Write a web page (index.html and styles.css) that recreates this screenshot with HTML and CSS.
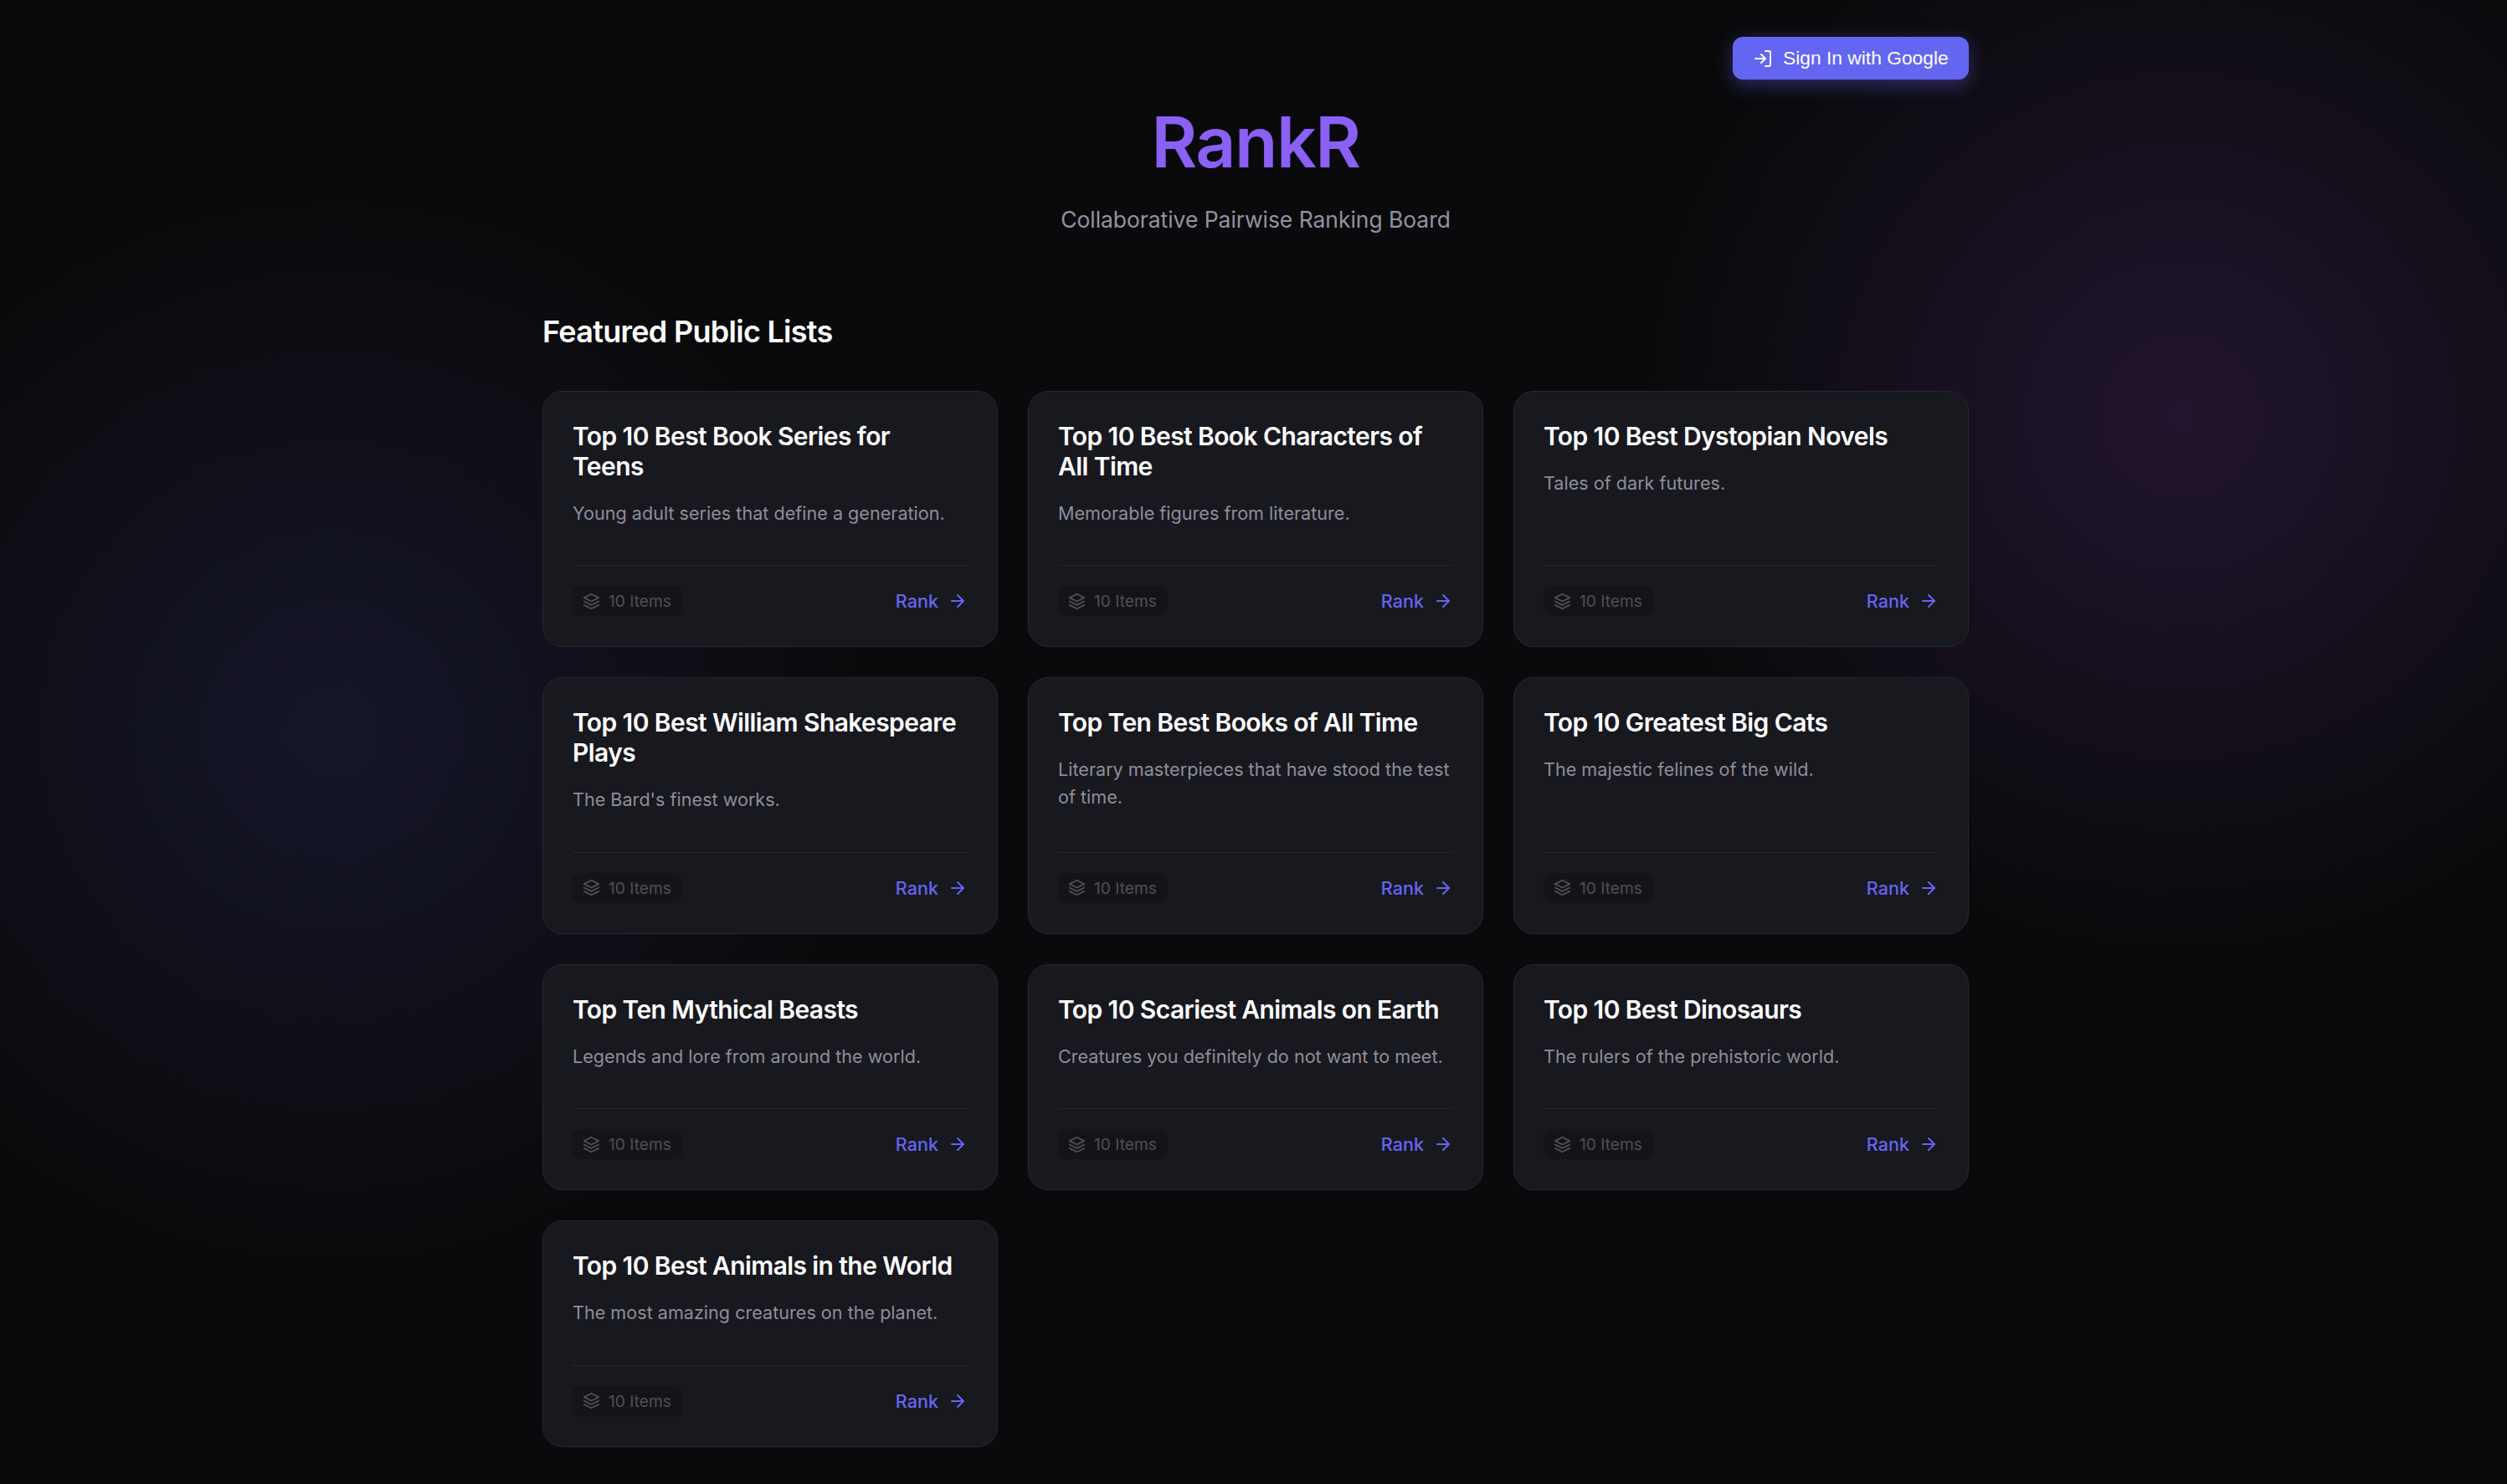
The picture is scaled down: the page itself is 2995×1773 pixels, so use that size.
FILE: index.html
```
<!DOCTYPE html>
<html lang="en">
<head>
<meta charset="utf-8">
<title>RankR</title>
<link rel="stylesheet" href="styles.css">
</head>
<body>
<svg class="sprite" width="0" height="0" aria-hidden="true">
  <symbol id="i-layers" viewBox="0 0 24 24"><path d="M12 2 2 7l10 5 10-5-10-5Z"/><path d="m2 17 10 5 10-5"/><path d="m2 12 10 5 10-5"/></symbol>
  <symbol id="i-arrow" viewBox="0 0 24 24"><path d="M5 12h14"/><path d="m12 5 7 7-7 7"/></symbol>
</svg>
<div class="page">
  <div class="topbar">
    <button class="signin">
      <svg class="ico-login" viewBox="0 0 24 24"><path d="M15 3h4a2 2 0 0 1 2 2v14a2 2 0 0 1-2 2h-4"/><path d="m10 17 5-5-5-5"/><path d="M15 12H3"/></svg>
      <span>Sign In with Google</span>
    </button>
  </div>
  <header class="hero">
    <h1 class="brand">RankR</h1>
    <p class="tagline">Collaborative Pairwise Ranking Board</p>
  </header>
  <h2 class="section-title">Featured Public Lists</h2>
  <main class="grid">
    <article class="card"><h3>Top 10 Best Book Series for Teens</h3><p>Young adult series that define a generation.</p><footer class="foot"><span class="chip"><svg class="ico-layers"><use href="#i-layers"/></svg>10 Items</span><a class="rank">Rank<svg class="ico-arrow"><use href="#i-arrow"/></svg></a></footer></article>
    <article class="card"><h3>Top 10 Best Book Characters of All Time</h3><p>Memorable figures from literature.</p><footer class="foot"><span class="chip"><svg class="ico-layers"><use href="#i-layers"/></svg>10 Items</span><a class="rank">Rank<svg class="ico-arrow"><use href="#i-arrow"/></svg></a></footer></article>
    <article class="card"><h3>Top 10 Best Dystopian Novels</h3><p>Tales of dark futures.</p><footer class="foot"><span class="chip"><svg class="ico-layers"><use href="#i-layers"/></svg>10 Items</span><a class="rank">Rank<svg class="ico-arrow"><use href="#i-arrow"/></svg></a></footer></article>
    <article class="card"><h3>Top 10 Best William Shakespeare Plays</h3><p>The Bard's finest works.</p><footer class="foot"><span class="chip"><svg class="ico-layers"><use href="#i-layers"/></svg>10 Items</span><a class="rank">Rank<svg class="ico-arrow"><use href="#i-arrow"/></svg></a></footer></article>
    <article class="card"><h3>Top Ten Best Books of All Time</h3><p>Literary masterpieces that have stood the test of time.</p><footer class="foot"><span class="chip"><svg class="ico-layers"><use href="#i-layers"/></svg>10 Items</span><a class="rank">Rank<svg class="ico-arrow"><use href="#i-arrow"/></svg></a></footer></article>
    <article class="card"><h3>Top 10 Greatest Big Cats</h3><p>The majestic felines of the wild.</p><footer class="foot"><span class="chip"><svg class="ico-layers"><use href="#i-layers"/></svg>10 Items</span><a class="rank">Rank<svg class="ico-arrow"><use href="#i-arrow"/></svg></a></footer></article>
    <article class="card"><h3>Top Ten Mythical Beasts</h3><p>Legends and lore from around the world.</p><footer class="foot"><span class="chip"><svg class="ico-layers"><use href="#i-layers"/></svg>10 Items</span><a class="rank">Rank<svg class="ico-arrow"><use href="#i-arrow"/></svg></a></footer></article>
    <article class="card"><h3>Top 10 Scariest Animals on Earth</h3><p>Creatures you definitely do not want to meet.</p><footer class="foot"><span class="chip"><svg class="ico-layers"><use href="#i-layers"/></svg>10 Items</span><a class="rank">Rank<svg class="ico-arrow"><use href="#i-arrow"/></svg></a></footer></article>
    <article class="card"><h3>Top 10 Best Dinosaurs</h3><p>The rulers of the prehistoric world.</p><footer class="foot"><span class="chip"><svg class="ico-layers"><use href="#i-layers"/></svg>10 Items</span><a class="rank">Rank<svg class="ico-arrow"><use href="#i-arrow"/></svg></a></footer></article>
    <article class="card"><h3>Top 10 Best Animals in the World</h3><p>The most amazing creatures on the planet.</p><footer class="foot"><span class="chip"><svg class="ico-layers"><use href="#i-layers"/></svg>10 Items</span><a class="rank">Rank<svg class="ico-arrow"><use href="#i-arrow"/></svg></a></footer></article>
  </main>
</div>
</body>
</html>
```
FILE: styles.css
```
* { box-sizing: border-box; }
html, body { margin: 0; height: 100%; }
body {
  min-height: 1773px;
  overflow: hidden;
  font-family: Inter, "Liberation Sans", sans-serif;
  color: #fff;
  background-color: #0a0a0c;
  background-image:
    radial-gradient(circle 640px at 2606px 497px, rgba(168, 85, 247, 0.15), transparent 100%),
    radial-gradient(circle 640px at 397px 873px, rgba(99, 102, 241, 0.13), transparent 100%);
}
.sprite { position: absolute; }
.page { width: 1704px; margin: 0 0 0 648px; padding-top: 44px; }
.topbar { display: flex; justify-content: flex-end; height: 51px; }
.signin {
  display: flex; align-items: center; gap: 12px;
  height: 51px; width: 282px; padding: 0 24px;
  border: 0; border-radius: 12px;
  background: #6366f1; color: #fff;
  font: 22.8px "Liberation Sans", Arial, sans-serif;
  white-space: nowrap;
  box-shadow: 0 6px 21px rgba(99, 102, 241, 0.4);
}
.ico-login { flex: none; width: 24px; height: 24px; fill: none; stroke: currentColor; stroke-width: 2; stroke-linecap: round; stroke-linejoin: round; }
.hero { text-align: center; }
.brand { margin: 21px 0 0; font-size: 84px; font-weight: 600; line-height: 108px; letter-spacing: -1.5px; color: #8a60f5; }
.tagline { margin: 18px 0 0; font-size: 26.4px; line-height: 40px; color: #9393a0; }
.section-title { margin: 90px 0 0; font-size: 36px; font-weight: 600; line-height: 48px; letter-spacing: -0.72px; }
.grid { display: grid; grid-template-columns: repeat(3, 1fr); gap: 36px; margin-top: 47px; }
.card {
  display: flex; flex-direction: column;
  padding: 35px; border-radius: 24px;
  background: #18181f; border: 1px solid #27272f;
}
.card h3 { margin: 0; padding-right: 6px; font-size: 30px; font-weight: 600; line-height: 36px; letter-spacing: -0.6px; color: #fff; }
.card p { margin: 22px 0 0; flex: 1; font-size: 21.6px; line-height: 32.4px; color: #8e8e9a; }
.foot { display: flex; justify-content: space-between; align-items: center; margin-top: 46px; padding-top: 24px; border-top: 1px solid #27272f; }
.chip { display: inline-flex; align-items: center; gap: 10px; height: 36px; margin-bottom: 1px; padding: 0 13px 0 12px; border-radius: 9px; background: #141418; color: #4f4f58; font-size: 19.2px; }
.ico-layers { width: 21px; height: 21px; fill: none; stroke: currentColor; stroke-width: 2; stroke-linecap: round; stroke-linejoin: round; }
.rank { display: inline-flex; align-items: center; gap: 11px; margin-bottom: 1px; color: #6366f1; font-size: 21.6px; font-weight: 500; }
.ico-arrow { width: 24px; height: 24px; fill: none; stroke: currentColor; stroke-width: 2; stroke-linecap: round; stroke-linejoin: round; }
```
